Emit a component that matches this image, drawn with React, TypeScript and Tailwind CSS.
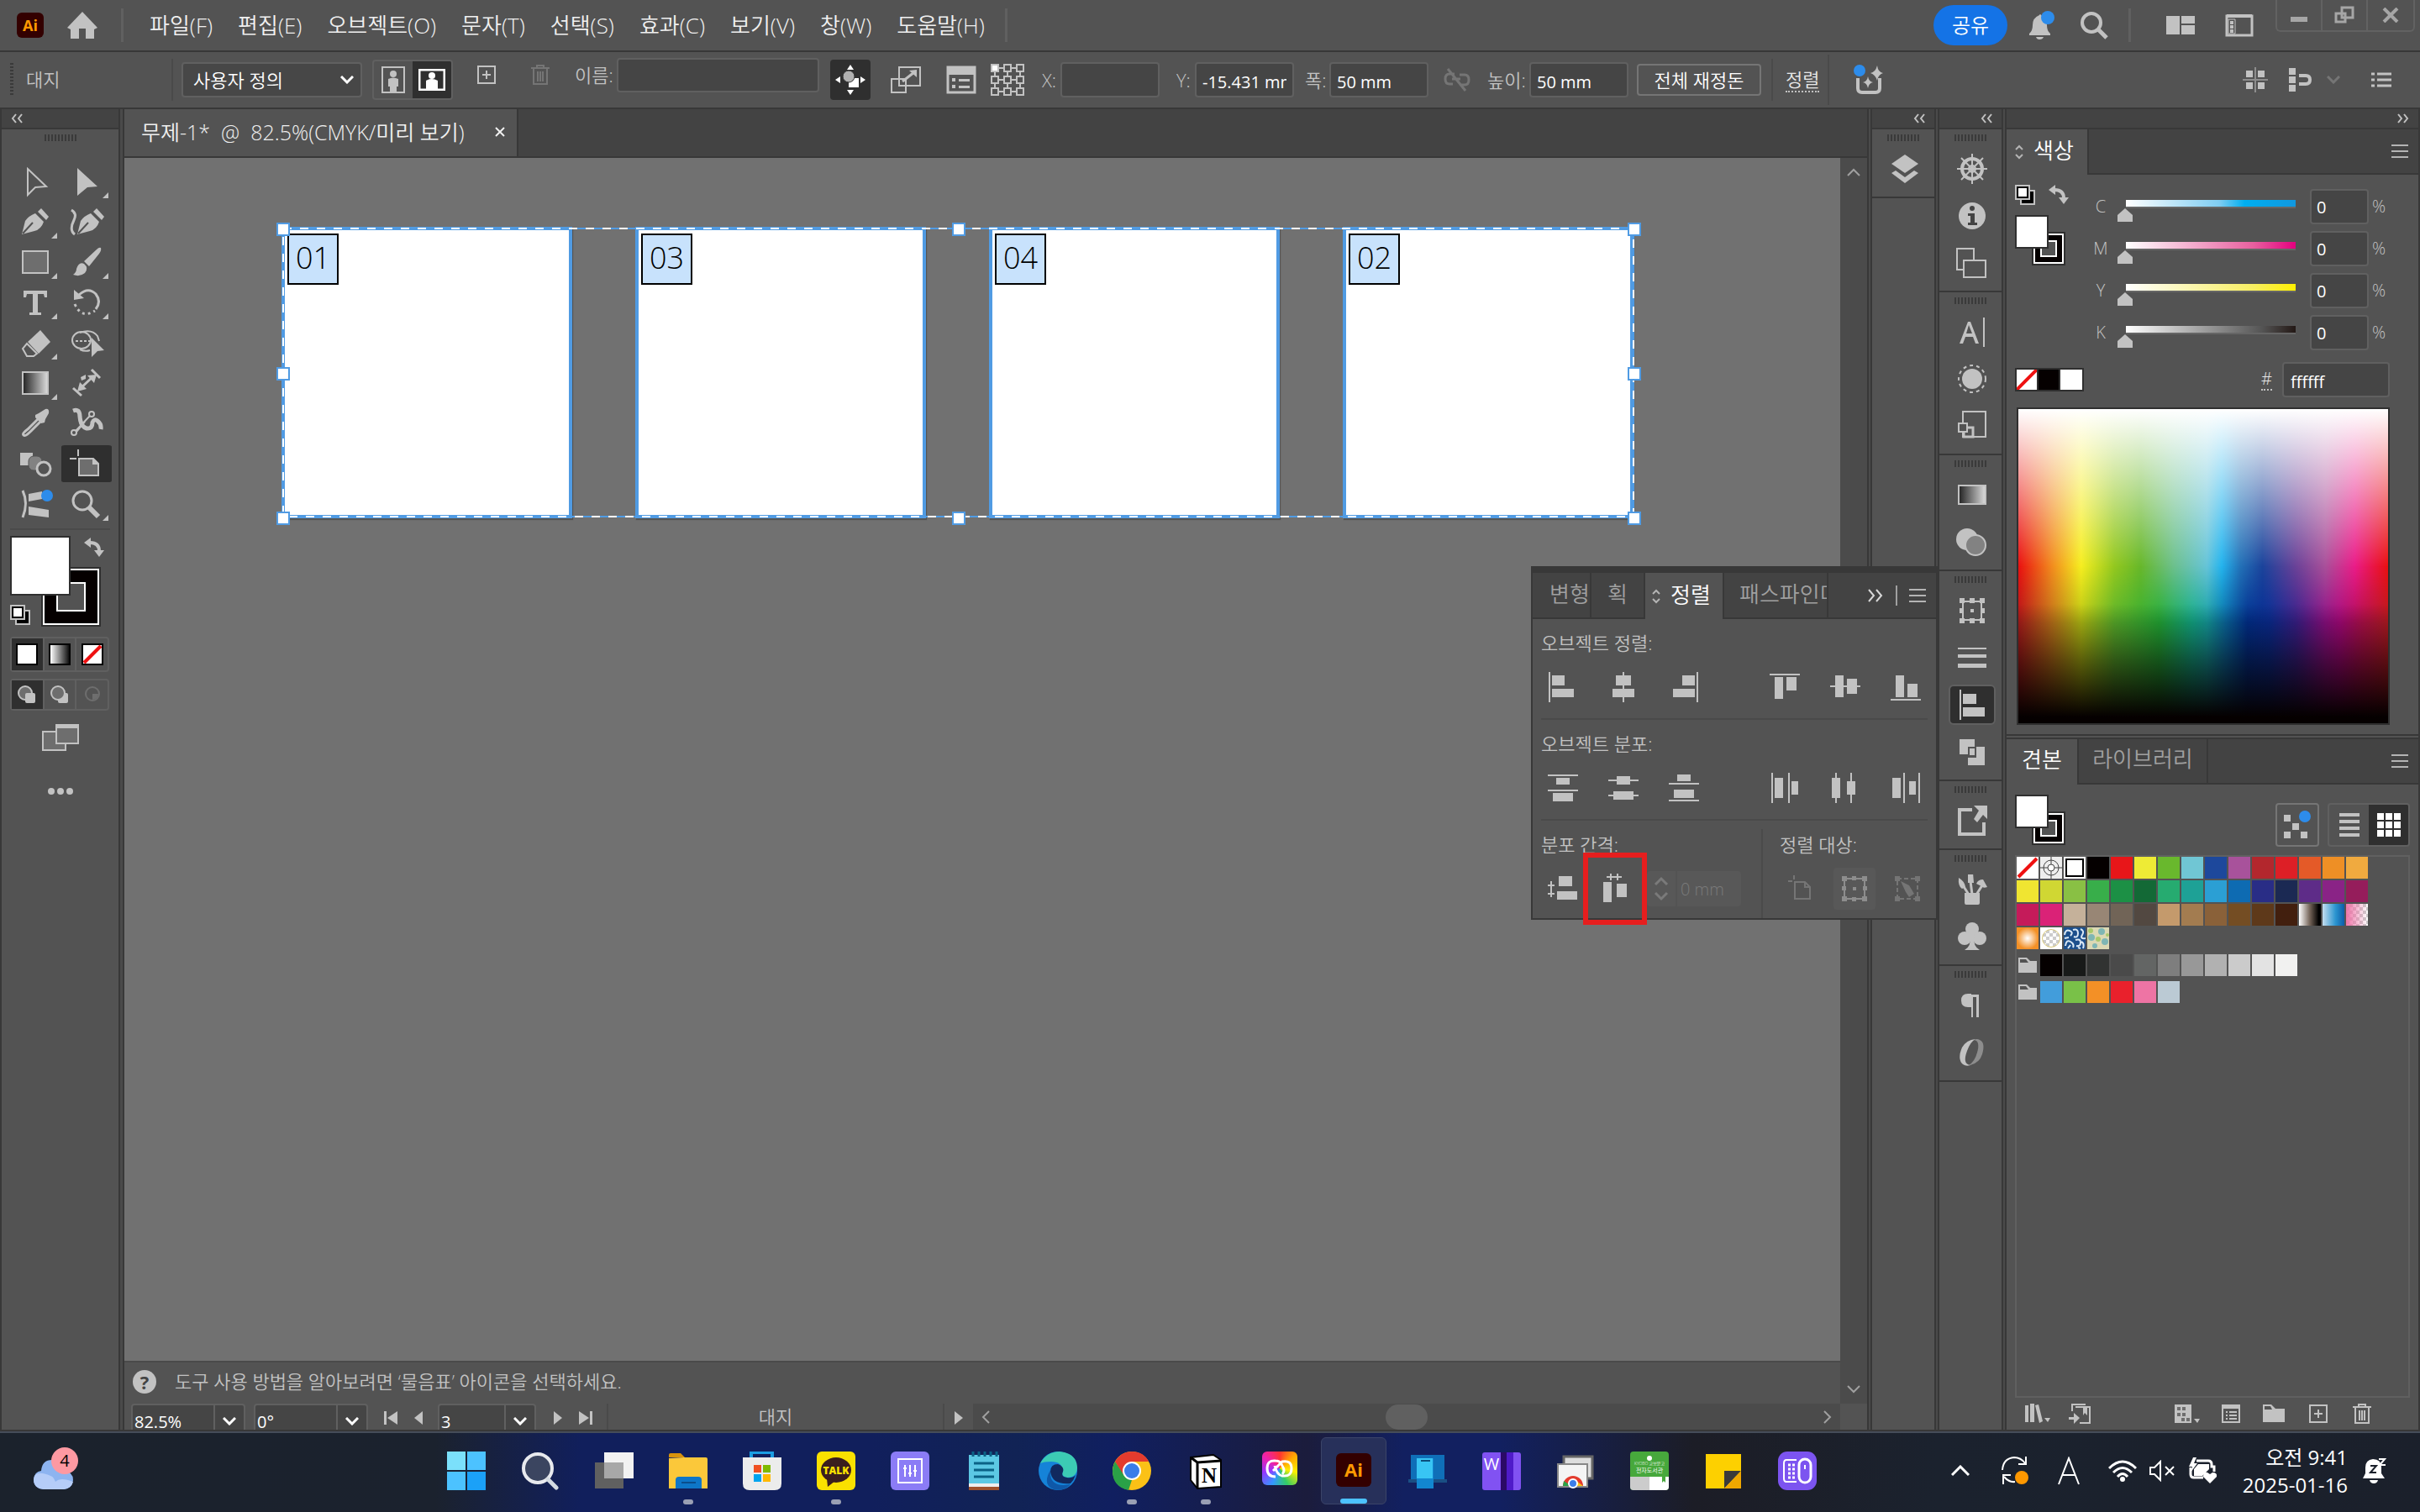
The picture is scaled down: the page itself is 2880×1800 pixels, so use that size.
import React from 'react';
import clsx from 'clsx';

const menus = ['파일(F)', '편집(E)', '오브젝트(O)', '문자(T)', '선택(S)', '효과(C)', '보기(V)', '창(W)', '도움말(H)'];

// 공통 svg 래퍼
function Svg({ w, h, box, cls, children }: any) {
  return (
    <svg width={w} height={h} viewBox={box || `0 0 ${w} ${h}`} fill="currentColor" className={clsx('block flex-none', cls)} aria-hidden="true">
      {children}
    </svg>
  );
}

function Grip() {
  return (
    <div className="h-5 flex items-center justify-center">
      <div className="w-[38px] h-2 bg-[repeating-linear-gradient(to_right,#3a3a3a_0_2px,#535353_2px_4px)]"></div>
    </div>
  );
}

function Arrows({ dir }: any) {
  return (
    <Svg w={16} h={12}>
      <path d={dir === 'r' ? 'M2 1 L6 6 L2 11 M9 1 L13 6 L9 11' : 'M7 1 L3 6 L7 11 M14 1 L10 6 L14 11'} fill="none" stroke="#c2c2c2" strokeWidth="2" />
    </Svg>
  );
}

function Chevron({ cls }: any) {
  return <Svg w={16} h={10} cls={cls}><path d="M1 1 L8 8 L15 1" fill="none" stroke="currentColor" strokeWidth="3" /></Svg>;
}

function MenuLines() {
  return <Svg w={20} h={16}><path d="M0 1H20M0 8H20M0 15H20" stroke="#b4b4b4" strokeWidth="2" /></Svg>;
}

// 상단 메뉴바
function TopBar() {
  return (
    <header className="h-[62px] flex-none flex items-center border-b-2 border-[#383838] pl-5 text-[#f0f0f0]">
      <div className="w-8 h-[30px] rounded-md bg-[#330000] text-[#ff9a00] text-lg font-bold leading-none flex items-center justify-center">Ai</div>
      <button className="ml-7" aria-label="홈">
        <Svg w={36} h={32} cls="text-[#c2c2c2]"><path d="M18 0 L36 19 L32 21 V32 H22 V20 H14 V32 H4 V21 L0 19Z" /></Svg>
      </button>
      <div className="ml-7 w-[3px] h-10 bg-[#606060]"></div>
      <nav className="ml-[31px] flex gap-[30px] text-[26px] whitespace-nowrap">
        {menus.map((m) => <button key={m}>{m}</button>)}
      </nav>
      <div className="ml-6 w-[3px] h-10 bg-[#606060]"></div>
      <div className="ml-auto flex items-center text-[#c2c2c2]">
        <button className="w-[88px] h-12 rounded-full bg-[#1473e6] text-white text-[24px]">공유</button>
        <button className="ml-6" aria-label="알림">
          <Svg w={34} h={34}>
            <path d="M14 5 Q15 3 16 5 Q23 8 23 17 Q23 24 27 27 V29 H2 V27 Q6 24 6 17 Q6 8 14 5Z" /><path d="M10 31 H19 Q18 34 14 34 Q11 34 10 31Z" />
            <circle cx="24" cy="8" r="8" fill="#2d8ceb" />
          </Svg>
        </button>
        <button className="ml-7" aria-label="검색">
          <Svg w={34} h={34}><circle cx="14" cy="14" r="11" fill="none" stroke="currentColor" strokeWidth="4" /><path d="M22 22 L32 32" stroke="currentColor" strokeWidth="5" /></Svg>
        </button>
        <div className="ml-6 w-[3px] h-10 bg-[#606060]"></div>
        <button className="ml-[42px]" aria-label="문서 정렬">
          <Svg w={34} h={24}><path d="M0 1H16V23H0ZM18 1H34V10H18ZM18 12H34V23H18Z" /></Svg>
        </button>
        <button className="ml-9" aria-label="작업 영역">
          <Svg w={34} h={28}><path d="M2 3H32V26H2Z" fill="none" stroke="currentColor" strokeWidth="3" /><path d="M2 1H32V5H2ZM6 9H10V13H6ZM6 14H10V18H6ZM6 19H10V23H6Z" /><path d="M4 7H12V24H4Z" fill="none" stroke="currentColor" /></Svg>
        </button>
        <div className="ml-[26px] mr-1.5 self-start h-[38px] mb-[22px] flex border-2 border-t-0 border-[#626262] rounded-b-md divide-x-2 divide-[#626262] text-[#a6a6a6]">
          <button className="w-[54px] flex justify-center items-center" aria-label="최소화"><Svg w={20} h={20}><path d="M0 12H20V18H0Z" /></Svg></button>
          <button className="w-[54px] flex justify-center items-center" aria-label="복원"><Svg w={24} h={22}><path d="M9 2H22V14H9ZM2 9H13V19H2Z" fill="#535353" stroke="currentColor" strokeWidth="3" /></Svg></button>
          <button className="w-[54px] flex justify-center items-center" aria-label="닫기"><Svg w={20} h={18}><path d="M2 1L18 17M18 1L2 17" stroke="currentColor" strokeWidth="4" /></Svg></button>
        </div>
      </div>
    </header>
  );
}

function Field({ id, label, value, cls }: any) {
  return (
    <>
      <label htmlFor={id} className={clsx('flex-none whitespace-nowrap', cls)}>{label}</label>
      <input id={id} defaultValue={value} className="flex-none w-[118px] h-[42px] rounded border-2 border-[#606060] bg-[#454545] px-[7px] pt-1 text-[20px] font-normal text-white" />
    </>
  );
}

// 대지 옵션 바
function OptionBar() {
  return (
    <div className="h-[68px] flex-none flex items-center border-b-2 border-[#383838] pl-3 text-[22px] text-[#c2c2c2] whitespace-nowrap">
      <div className="w-1 h-10 bg-[repeating-linear-gradient(#3a3a3a_0_2px,#535353_2px_4px)]"></div>
      <div className="ml-[15px] w-[173px] pb-0.5">대지</div>
      <div className="w-0.5 h-[50px] bg-[#4a4a4a]"></div>
      <div className="relative ml-2.5 text-white">
        <select aria-label="대지 사전 설정" className="appearance-none w-[215px] h-[42px] rounded border-2 border-[#606060] bg-[#474747] pl-3 text-white">
          <option>사용자 정의</option>
        </select>
        <Chevron cls="absolute right-[10px] top-4" />
      </div>
      <div className="ml-3 flex w-24 h-[48px] rounded border-2 border-[#606060] overflow-hidden">
        <button className="flex-1 flex items-center justify-center" aria-label="세로">
          <Svg w={28} h={32}><path d="M1 1H27V31H1Z" fill="none" stroke="currentColor" strokeWidth="2" /><circle cx="14" cy="9" r="4" /><path d="M8 15Q14 12 20 15V24H18V31H10V24H8Z" /></Svg>
        </button>
        <button className="flex-1 flex items-center justify-center bg-[#2f2f2f] text-white" aria-label="가로">
          <Svg w={32} h={26}><path d="M1 1H31V25H1Z" fill="none" stroke="currentColor" strokeWidth="3" /><circle cx="16" cy="8" r="4" /><path d="M9 14Q16 10 23 14V25H9Z" /></Svg>
        </button>
      </div>
      <div className="self-start h-[54px] flex items-center">
        <button className="ml-[27px]" aria-label="새 대지"><Svg w={26} h={24}><path d="M3 2H23V22H3Z" fill="none" stroke="currentColor" strokeWidth="2" /><path d="M8 12H18M13 7V17" stroke="currentColor" strokeWidth="2" /></Svg></button>
        <button className="ml-[38px] text-[#757575]" aria-label="대지 삭제"><Svg w={26} h={26}><path d="M2 5H24M9 5V2H17V5M5 6V24H21V6M10 9V21M13 9V21M16 9V21" fill="none" stroke="currentColor" strokeWidth="2" /></Svg></button>
        <label htmlFor="nm" className="ml-7 w-[50px]">이름:</label>
        <input id="nm" className="w-[241px] h-[41px] rounded border-2 border-[#606060] bg-[#454545]" />
      </div>
      <button className="ml-[13px] w-12 h-12 rounded bg-[#2f2f2f] text-white flex items-center justify-center" aria-label="대지와 함께 이동">
        <Svg w={36} h={36}>
          <path d="M18 0L22 6H14ZM18 36L14 30H22ZM0 18L6 14V22ZM36 18L30 14V22Z" />
          <path d="M16 16H28V27H16Z" /><circle cx="16" cy="14" r="7" fill="#b0b0b0" stroke="#2f2f2f" />
        </Svg>
      </button>
      <Svg w={40} h={36} cls="ml-[22px]"><path d="M12 3H37V25H12ZM3 17H20V33H3Z" fill="none" stroke="currentColor" strokeWidth="2" /><path d="M16 20L30 9" stroke="currentColor" strokeWidth="3" /><path d="M33 6V15L24 7Z" /></Svg>
      <Svg w={40} h={36} cls="ml-[26px]"><path d="M4 3H36V33H4Z" fill="none" stroke="currentColor" strokeWidth="3" /><path d="M4 3H36V12H4ZM9 16H13V20H9ZM17 17H30V20H17ZM9 24H13V28H9ZM17 25H30V28H17Z" /></Svg>
      <Svg w={42} h={40} cls="ml-3.5"><path d="M6 6H36V34H6ZM6 20H36M21 6V34" fill="none" stroke="currentColor" strokeWidth="2" />
        {[6, 20, 34].map((y) => [6, 21, 36].map((x) => <rect key={x + '-' + y} x={x - 4} y={y - 4} width="8" height="8" fill={x + y === 12 ? '#fff' : '#535353'} stroke="currentColor" strokeWidth="2" />))}
      </Svg>
      <Field id="px" label="X:" value="" cls="ml-5 w-[22px]" />
      <Field id="py" label="Y:" value="-15.431 mm" cls="ml-5 w-[22px]" />
      <Field id="pw" label="폭:" value="50 mm" cls="ml-[13px] w-[29px]" />
      <Svg w={32} h={28} cls="ml-[18px] text-[#757575]"><path d="M13 7H7Q2 7 2 13T7 19H11M19 8H25Q30 8 30 14T25 20H21M5 1L26 27M10 13H20" fill="none" stroke="currentColor" strokeWidth="3" /></Svg>
      <Field id="ph" label="높이:" value="50 mm" cls="ml-5 w-[50px]" />
      <button className="ml-2.5 w-[148px] h-[38px] flex-none rounded border-2 border-[#757575] text-white leading-none">전체 재정돈</button>
      <div className="ml-3 w-0.5 h-[50px] bg-[#4a4a4a]"></div>
      <button className="ml-[15px] text-[#e8e8e8] leading-7 border-b-2 border-dotted border-[#c2c2c2]">정렬</button>
      <div className="ml-2.5 w-0.5 h-[60px] bg-[#4a4a4a]"></div>
      <button className="ml-7" aria-label="생성형 도구">
        <Svg w={38} h={36}><path d="M6 16V28Q6 33 11 33H27Q32 33 32 28V16" fill="none" stroke="currentColor" strokeWidth="4" />
          <path d="M29 1Q30 9 36 10Q30 12 29 19Q27 12 21 10Q27 9 29 1ZM18 14Q19 20 24 21Q19 22 18 28Q17 22 12 21Q17 20 18 14Z" /><circle cx="8" cy="7" r="7" fill="#2d8ceb" /></Svg>
      </button>
      <div className="ml-auto mr-[34px] flex items-center">
        <Svg w={30} h={30}><path d="M4 4H12V12H4ZM18 4H26V12H18ZM4 18H12V26H4ZM18 18H26V26H18Z" /><path d="M0 15H30M15 0V30" stroke="#8d8d8d" strokeWidth="2" /></Svg>
        <Svg w={30} h={30} cls="ml-6"><path d="M1 1H9V9H1ZM1 11H9V19H1ZM1 21H9V29H1Z" /><path d="M13 10H21Q26 10 26 15T21 20H13" fill="none" stroke="currentColor" strokeWidth="4" /></Svg>
        <Chevron cls="ml-4 text-[#757575]" />
        <Svg w={24} h={18} cls="ml-[37px]"><path d="M7 2H24M7 9H24M7 16H24M0 2H4M0 9H4M0 16H4" stroke="currentColor" strokeWidth="3" /></Svg>
      </div>
    </div>
  );
}

const line = { fill: 'none', stroke: 'currentColor', strokeWidth: 2 };

// 도구 패널 아이콘 (40x36)
const tools: any[] = [
  { n: '선택', d: <path d="M11 3L33 24L20 25L11 34Z" {...line} /> },
  { n: '직접 선택', sub: true, d: <path d="M9 2L33 24L21 25L9 35Z" /> },
  { n: '펜', sub: true, d: <><path d="M4 33L8 17Q12 11 20 8L30 18Q27 27 19 29Z" /><path d="M23 6L27 2L36 12L33 16Z" /><path d="M5 32L17 19" stroke="#535353" strokeWidth="2" /></> },
  { n: '곡률', d: <><g transform="translate(5 0)"><path d="M4 33L8 17Q12 11 20 8L30 18Q27 27 19 29Z" /><path d="M23 6L27 2L36 12L33 16Z" /><path d="M5 32L17 19" stroke="#535353" strokeWidth="2" /></g><path d="M2 4Q9 8 5 16Q-1 28 6 33" {...line} strokeWidth="3" /></> },
  { n: '사각형', sub: true, d: <path d="M5 5H35V31H5Z" {...line} fill="#6e6e6e" /> },
  { n: '브러시', sub: true, d: <><path d="M37 1Q38 4 35 8L23 23L17 17L32 3Q35 0 37 1Z" /><path d="M4 33Q8 30 8 26Q11 17 17 20Q23 25 18 31Q12 36 4 33Z" /></> },
  { n: '문자', sub: true, d: <path d="M6 4H34V12H31L30 8H23V30H27V33H13V30H17V8H10L9 12H6Z" /> },
  { n: '회전', sub: true, d: <><path d="M11 9Q22 -1 31 8Q38 17 31 26" {...line} strokeWidth="3" /><path d="M5 3V15L17 13Z" /><path d="M6 20Q14 38 30 28" {...line} strokeWidth="3" strokeDasharray="3 4" /></> },
  { n: '지우개', sub: true, d: <><path d="M11 17L26 3L38 17L24 31Z" /><path d="M10 19L22 31L18 34H10L5 25Z" {...line} /></> },
  { n: '도형 구성', d: <><ellipse cx="14" cy="15" rx="11" ry="10" {...line} /><path d="M12 6Q26 1 33 10L35 16" {...line} /><path d="M7 16H25" {...line} strokeDasharray="3 2" /><path d="M12 26Q18 29 24 27" {...line} /><path d="M26 12L41 27L33 28L26 35Z" /></> },
  { n: '그라디언트', sub: true, d: <path d="M5 5H35V31H5Z" {...line} fill="url(#gr)" /> },
  { n: '치수', d: <><path d="M11 26L28 10M4 24L14 33M26 2L36 12" {...line} strokeWidth="3" /><path d="M9 28L12 17L20 25ZM32 8L21 9L29 18ZM13 11L19 8V13L14 15Z" /></> },
  { n: '스포이드', d: <><path d="M25 11L11 25Q4 30 6 32T14 28L28 14" {...line} strokeWidth="3" /><path d="M20 8L24 6L32 1Q37 0 36 6L32 13L31 17L27 18L20 11Z" /></> },
  { n: '퍼펫 뒤틀기', d: <><path d="M4 3Q12 0 12 10Q13 22 20 24Q27 25 27 17Q29 12 33 15Q38 19 37 25" {...line} strokeWidth="5" /><circle cx="5" cy="29" r="3" {...line} /><circle cx="26" cy="7" r="3" {...line} /><path d="M7 27L24 9M8 28L18 16" {...line} /></> },
  { n: '블렌드', d: <><path d="M2 5H17V20H2Z" /><rect x="12" y="9" width="16" height="17" rx="6" fill="#828282" stroke="#535353" /><circle cx="30" cy="24" r="8" {...line} strokeWidth="3" fill="#535353" /></> },
  { n: '대지', on: true, d: <><path d="M0 12H8M10 1V9" {...line} /><path d="M11 12H28L34 18V32H11Z" {...line} fill="#6e6e6e" /><path d="M27 11V19H35Z" /></> },
  { n: '교차', d: <><path d="M5 2Q12 17 5 34" {...line} strokeWidth="3" /><path d="M12 6L28 3V12L12 15ZM12 21L36 25V34L12 31Z" /><circle cx="34" cy="8" r="7" fill="#2d8ceb" /></> },
  { n: '돋보기', sub: true, d: <><circle cx="15" cy="14" r="11" {...line} strokeWidth="3" /><path d="M23 22L34 33" {...line} strokeWidth="6" /></> },
];

function FillStroke() {
  return (
    <Svg w={60} h={60}>
      <path d="M21 21H59V59H21Z" fill="#050000" stroke="#2f2f2f" strokeWidth="2" /><path d="M23 23H57V57H23Z" fill="none" stroke="#fff" strokeWidth="2" /><path d="M31 31H49V49H31Z" fill="#535353" stroke="#fff" strokeWidth="2" />
      <path d="M1 1H39V39H1Z" fill="#fff" stroke="#2f2f2f" strokeWidth="2" />
    </Svg>
  );
}

function DefaultIcon() {
  return (
    <Svg w={24} h={24}>
      <path d="M7 7H23V23H7Z" fill="#000" stroke="#c2c2c2" strokeWidth="2" /><path d="M13 13H17V17H13Z" fill="#535353" stroke="#c2c2c2" /><path d="M1 1H17V17H1Z" fill="#000" stroke="#c2c2c2" strokeWidth="2" /><path d="M4 4H14V14H4Z" fill="#fff" />
    </Svg>
  );
}

function SwapIcon() {
  return <Svg w={24} h={24} cls="text-[#c2c2c2]"><path d="M7 6Q18 6 18 16" fill="none" stroke="currentColor" strokeWidth="4" /><path d="M8 0V12L0 6ZM12 15H24L18 23Z" /></Svg>;
}

function ToolPanel() {
  return (
    <aside className="w-[143px] flex-none border-x-2 border-[#383838] text-[#c2c2c2]">
      <svg width="0" height="0" className="absolute"><defs><linearGradient id="gr"><stop offset="0" stopColor="#222" /><stop offset="1" stopColor="#ddd" /></linearGradient></defs></svg>
      <div className="h-6 bg-[#434343] border-b-2 border-[#383838] flex items-center pl-2.5"><Arrows dir="l" /></div>
      <Grip />
      <div className="mt-[18px] pl-2.5 grid grid-cols-[61px_61px]">
        {tools.map((t) => (
          <button key={t.n} aria-label={t.n} className={clsx('h-12 w-[60px] flex items-center', t.on && 'bg-[#2f2f2f] rounded bg-clip-content py-0.5')}>
            <Svg w={60} h={44} box="0 2 60 44">
              <g transform="translate(10 6)">{t.d}</g>
              {t.sub && <path d="M56 37V44H49Z" />}
            </Svg>
          </button>
        ))}
      </div>
      <div className="mx-2.5 mt-[5px] h-0.5 bg-[#4a4a4a]"></div>
      <div className="mx-2.5 mt-[7px] h-[110px] w-[120px] relative">
        <Svg w={108} h={108}>
          <path d="M38 38H107V107H38Z" fill="#050000" stroke="#2f2f2f" strokeWidth="2" /><path d="M40 40H105V105H40Z" fill="none" stroke="#fff" strokeWidth="2" /><path d="M56 56H89V89H56Z" fill="#535353" stroke="#fff" strokeWidth="2" />
          <path d="M1 1H71V70H1Z" fill="#fff" stroke="#2f2f2f" strokeWidth="2" />
        </Svg>
        <button className="absolute left-[88px] top-0.5" aria-label="칠과 선 교체"><SwapIcon /></button>
        <button className="absolute left-0 top-[82px]" aria-label="초기값"><DefaultIcon /></button>
      </div>
      <div className="mx-2.5 mt-2.5 w-[118px] h-[42px] flex rounded border-2 border-[#606060] divide-x-2 divide-[#606060]">
        <button className="flex-1 bg-[#2f2f2f] flex items-center justify-center" aria-label="색상"><span className="w-[26px] h-[26px] bg-white border-2 border-black"></span></button>
        <button className="flex-1 flex items-center justify-center" aria-label="그라디언트 칠"><span className="w-[26px] h-[26px] border-2 border-black bg-[linear-gradient(to_right,#fff,#111)]"></span></button>
        <button className="flex-1 flex items-center justify-center" aria-label="없음"><Svg w={26} h={26}><path d="M1 1H25V25H1Z" fill="#fff" stroke="#000" strokeWidth="2" /><path d="M3 23L23 3" stroke="#e11" strokeWidth="4" /></Svg></button>
      </div>
      <div className="mx-2.5 mt-2 w-[118px] h-[38px] flex rounded border-2 border-[#606060] divide-x-2 divide-[#606060]">
        <button className="flex-1 bg-[#2f2f2f] flex items-center justify-center" aria-label="표준 그리기"><Svg w={22} h={22}><circle cx="9" cy="9" r="8" {...line} fill="#6e6e6e" /><rect x="9" y="9" width="12" height="12" rx="2" /></Svg></button>
        <button className="flex-1 flex items-center justify-center" aria-label="배경 그리기"><Svg w={22} h={22}><rect x="9" y="9" width="12" height="12" rx="2" /><circle cx="9" cy="9" r="8" {...line} fill="#6e6e6e" /></Svg></button>
        <button className="flex-1 flex items-center justify-center text-[#6e6e6e]" aria-label="내부 그리기"><Svg w={22} h={22}><circle cx="11" cy="10" r="8" {...line} /><path d="M11 10H18Q18 17 11 17Z" /></Svg></button>
      </div>
      <button className="block mt-4 ml-12" aria-label="화면 모드"><Svg w={44} h={32}><path d="M1 9H28V31H1Z" {...line} fill="#6e6e6e" /><path d="M17 1H43V23H17Z" {...line} fill="#6e6e6e" /><path d="M17 1H43V5H17Z" /></Svg></button>
      <button className="block mt-11 ml-[54px]" aria-label="도구 모음 편집"><Svg w={32} h={8}><circle cx="5" cy="4" r="4" /><circle cx="16" cy="4" r="4" /><circle cx="27" cy="4" r="4" /></Svg></button>
    </aside>
  );
}

// 캔버스 위 대지들
const boards = [
  { no: '01', pos: 'left-[187px]' },
  { no: '03', pos: 'left-[608px]' },
  { no: '04', pos: 'left-[1029px]' },
  { no: '02', pos: 'left-[1450px]' },
];

function Canvas() {
  return (
    <div className="relative flex-1 min-h-0 overflow-hidden bg-[#717171]">
      {boards.map((b) => (
        <div key={b.no} className={clsx('absolute top-[82px] w-[346px] h-[347px] bg-white border-4 border-[#509be3] shadow-[1px_2px_1px_#555]', b.pos)}>
          <div className="ml-[3px] mt-1 w-[61px] h-[61px] border-2 border-black bg-[#c8e2fc] text-black text-[36px] leading-[54px] text-center">{b.no}</div>
        </div>
      ))}
      <svg width="1630" height="366" viewBox="0 0 1630 366" className="absolute left-[178px] top-[74px]" aria-hidden="true">
        <path d="M11 10H1618V353H11Z" fill="none" stroke="#509be3" strokeWidth="2" />
        <path d="M11 10H1618V353H11Z" fill="none" stroke="#fff" strokeWidth="2" strokeDasharray="10 10" />
        {[11, 815, 1619].map((x) => [11, 183, 355].map((y) => (x === 815 && y === 183) ? null :
          <rect key={x + '-' + y} x={x - 7} y={y - 7} width="14" height="14" fill="#fff" stroke="#509be3" strokeWidth="2" />))}
      </svg>
    </div>
  );
}

function StatusField({ id, label, value, cls }: any) {
  return (
    <div className={clsx('flex-none h-11 flex rounded border-2 border-[#606060] bg-[#454545] text-white', cls)}>
      <input id={id} aria-label={label} defaultValue={value} className="min-w-0 flex-1 pl-0.5 text-[20px] font-normal" />
      <button className="w-[36px] border-l-2 border-[#606060] flex justify-center pt-3.5" aria-label={label + ' 목록'}><Chevron /></button>
    </div>
  );
}

function DocArea() {
  return (
    <section className="flex-1 min-w-0 flex flex-col border-x-2 border-[#383838] bg-[#535353]">
      <div className="h-[58px] flex-none flex bg-[#434343] border-b-2 border-[#383838]">
        <div className="w-[469px] border-r-2 border-[#383838] bg-[#535353] flex items-center pl-5 pb-0.5 text-[25px] leading-[54px] text-[#f0f0f0] whitespace-nowrap">
          무제-1*{'\u00a0\u00a0'}@{'\u00a0\u00a0'}82.5%(CMYK/미리 보기)
          <button className="ml-auto mr-3.5" aria-label="탭 닫기"><Svg w={12} h={14}><path d="M1 2L11 12M11 2L1 12" stroke="currentColor" strokeWidth="2" /></Svg></button>
        </div>
      </div>
      <div className="flex-1 min-h-0 flex">
        <div className="flex-1 min-w-0 flex flex-col">
          <Canvas />
          <div className="h-[51px] flex-none border-t-2 border-[#4a4a4a] flex items-center pl-2.5 pb-1 gap-[22px] text-[22px] text-[#c2c2c2] whitespace-nowrap">
            <button className="w-7 h-7 rounded-full bg-[#c2c2c2] text-[#434343] font-bold leading-7" aria-label="도움말">?</button>
            도구 사용 방법을 알아보려면 ‘물음표’ 아이콘을 선택하세요.
          </div>
        </div>
        <div className="w-8 flex-none bg-[#4b4b4b] flex flex-col items-center justify-between py-3 text-[#a0a0a0]">
          <Svg w={16} h={10}><path d="M1 9L8 2L15 9" {...line} /></Svg>
          <Svg w={16} h={10}><path d="M1 1L8 8L15 1" {...line} /></Svg>
        </div>
      </div>
      <div className="h-[31px] flex-none overflow-hidden flex items-start pl-2 text-[#c2c2c2]">
        <StatusField id="zm" label="확대" value="82.5%" cls="w-[136px]" />
        <StatusField id="rt" label="회전" value="0°" cls="ml-2.5 w-[136px]" />
        <div className="flex-none h-[34px] ml-[18px] flex items-center gap-4">
          <Svg w={18} h={16}><path d="M1 0H4V16H1ZM17 0V16L5 8Z" /></Svg>
          <Svg w={16} h={16}><path d="M13 0V16L3 8Z" /></Svg>
        </div>
        <StatusField id="ab" label="대지 탐색" value="3" cls="ml-[15px] w-[117px]" />
        <div className="flex-none h-[34px] ml-[18px] flex items-center gap-4">
          <Svg w={16} h={16}><path d="M3 0V16L13 8Z" /></Svg>
          <Svg w={18} h={16}><path d="M14 0H17V16H14ZM1 0V16L13 8Z" /></Svg>
        </div>
        <div className="flex-none h-[31px] ml-4 w-[402px] border-x-2 border-[#4a4a4a] text-center text-[22px] leading-[31px]">대지</div>
        <div className="flex-none h-[34px] ml-2.5 flex items-center"><Svg w={16} h={16}><path d="M2 0V16L12 8Z" /></Svg></div>
        <div className="ml-2 mr-8 flex-1 h-full bg-[#4b4b4b] flex items-center justify-between px-2.5 text-[#a0a0a0]">
          <Svg w={10} h={16}><path d="M9 1L2 8L9 15" {...line} /></Svg>
          <div className="w-[50px] h-[30px] rounded-full bg-[#606060]"></div>
          <Svg w={10} h={16}><path d="M1 1L8 8L1 15" {...line} /></Svg>
        </div>
      </div>
    </section>
  );
}

// 아이콘 도크
const dock: any[][] = [
  [
    ['색상 안내', <><circle cx="20" cy="18" r="12" {...line} strokeWidth="4" /><circle cx="20" cy="18" r="4" {...line} /><path d="M20 0V36M2 18H38M7 5L33 31M33 5L7 31" {...line} /></>],
    ['정보', <><circle cx="20" cy="18" r="16" /><path d="M15 15H23V26H26V29H15V26H18V18H15Z" fill="#434343" /><circle cx="20" cy="9" r="3" fill="#434343" /></>],
    ['변형 효과', <><path d="M2 1H22V26H2Z" {...line} /><path d="M10 15H36V35H10Z" {...line} fill="#535353" /></>],
  ],
  [
    ['문자', <path d="M5 32L15 6H18L28 32H24L21 24H12L9 32ZM13 20H20L16 10ZM33 1H35V36H33Z" fillRule="evenodd" />],
    ['모양', <><circle cx="20" cy="18" r="12" /><circle cx="20" cy="18" r="16" {...line} strokeDasharray="4 4" /></>],
    ['그래픽 스타일', <><path d="M9 1H36V31H9Z" {...line} /><path d="M10 20H21V31H10Z" {...line} strokeWidth="3" fill="#535353" /><path d="M4 15H14V25H4Z" {...line} fill="#535353" /></>],
  ],
  [
    ['그라디언트', <path d="M4 7H36V29H4Z" {...line} fill="url(#gr)" />],
    ['투명도', <><circle cx="14" cy="15" r="13" /><circle cx="24" cy="22" r="12" {...line} fill="#828282" /></>],
  ],
  [
    ['변형', <><path d="M9 7H31V29H9Z" {...line} /><path d="M5 3H11V9H5ZM17 3H23V9H17ZM29 3H35V9H29ZM5 15H10V21H5ZM30 15H35V21H30ZM5 27H11V33H5ZM17 27H23V33H17ZM29 27H35V33H29ZM18 16H22V20H18Z" /></>],
    ['획', <path d="M3 6H37V8H3ZM3 14H37V18H3ZM3 25H37V30H3Z" />],
    ['정렬', <path d="M5 0H7V36H5ZM9 5H25V17H9ZM9 21H35V32H9Z" />],
    ['패스파인더', <><path d="M5 3H23V12H15V21H5ZM25 12H35V34H15V25H25Z" /><path d="M17 14H23V22H17Z" /></>],
  ],
  [['자산 내보내기', <><path d="M20 5H5V34H34V20" {...line} strokeWidth="4" /><path d="M22 0H38V16L33 11L26 20L22 16L28 6Z" /></>]],
  [
    ['브러시', <><path d="M11 22H29V34Q29 36 27 36H13Q11 36 11 34ZM15 0L21 -2L22 10H15Z" /><path d="M18 8L20 24M9 13L16 24M32 13L25 24" {...line} strokeWidth="3" /><path d="M4 4Q11 8 12 15L8 17Q3 14 4 4ZM25 11Q27 6 33 6L38 15Q33 17 31 14Z" /></>],
    ['심볼', <><circle cx="20" cy="9" r="8" /><circle cx="11" cy="20" r="8" /><circle cx="29" cy="20" r="8" /><path d="M18 16H22Q21 30 29 34H11Q19 30 18 16Z" /></>],
  ],
  [
    ['단락', <><path d="M19 4V20H15Q7 20 7 12T15 4Z" /><path d="M21 5H28V32H25V8H21V32H19V5Z" /></>],
    ['OpenType', <><path d="M24 2Q13 3 8 12Q2 26 9 32Q13 35 18 33Q8 32 14 16Q18 5 24 2Z" /><path d="M18 33Q29 30 32 20Q36 6 29 3Q26 1 22 3Q30 4 26 18Q23 29 16 33Z" fill="#8d8d8d" /></>],
  ],
];

function DockColumn({ groups, active }: any) {
  return (
    <div className="w-[78px] flex-none border-x-2 border-[#383838] text-[#c2c2c2]">
      <div className="h-6 bg-[#434343] border-b-2 border-[#383838] flex items-center justify-end pr-2.5"><Arrows dir="l" /></div>
      {groups.map((g: any[], i: number) => (
        <div key={i} className="border-b-2 border-[#383838] pb-1">
          <Grip />
          {g.map(([name, d]: any) => (
            <button key={name} aria-label={name} className="h-14 w-full pl-1 pb-0.5 flex items-center justify-center">
              <span className={clsx('w-14 h-12 rounded-md flex items-center justify-center', name === active && 'bg-[#2f2f2f] border-2 border-[#606060]')}>
                <Svg w={40} h={36}>{d}</Svg>
              </span>
            </button>
          ))}
        </div>
      ))}
    </div>
  );
}

const layers = [[['레이어', <><path d="M20 1L36 12L20 23L4 12Z" /><path d="M4 23L9 20L20 28L31 20L36 23L20 35Z" /></>]]];

const inks = [
  { n: 'C', bar: 'bg-[linear-gradient(to_right,#fff,#7fcdf2_55%,#00aeef_70%,#1198e0)]' },
  { n: 'M', bar: 'bg-[linear-gradient(to_right,#fff,#e8609f_75%,#e4007f)]' },
  { n: 'Y', bar: 'bg-[linear-gradient(to_right,#fff,#f7ee62_75%,#fff100)]' },
  { n: 'K', bar: 'bg-[linear-gradient(to_right,#fff,#555_80%,#231815)]' },
];

const spectrumTop = [[0, '#ea1010'], [9, '#f28a1e'], [17, '#f6ee20'], [26, '#93c81f'], [33, '#68b82a'], [42, '#6cc08c'], [51, '#66c4d8'], [55, '#24b4ee'], [60, '#2372b8'], [66, '#1b449c'], [75, '#6a4298'], [83, '#a9509a'], [91, '#ea1c88'], [100, '#ea1010']];
const spectrumLow = [[0, '#b01c1c'], [9, '#c0741a'], [17, '#b8c414'], [26, '#5cb42c'], [38, '#24ad36'], [47, '#12ac88'], [51, '#14a0a0'], [56, '#0a6ca4'], [62, '#003090'], [68, '#0a2c94'], [75, '#38208c'], [83, '#8e0f85'], [87, '#a8087c'], [93, '#b4104c'], [100, '#b81c22']];

function Spectrum() {
  return (
    <svg viewBox="0 0 440 374" preserveAspectRatio="none" className="block w-[444px] h-[378px] border-2 border-[#2f2f2f]" role="img" aria-label="색상 스펙트럼">
      <defs>
        <linearGradient id="sa">{spectrumTop.map(([o, c]) => <stop key={o} offset={o + '%'} stopColor={c as string} />)}</linearGradient>
        <linearGradient id="sb">{spectrumLow.map(([o, c]) => <stop key={o} offset={o + '%'} stopColor={c as string} />)}</linearGradient>
        <linearGradient id="sm" x2="0" y2="1"><stop offset=".5" stopColor="#000" /><stop offset=".68" stopColor="#fff" /></linearGradient>
        <linearGradient id="sw" x2="0" y2="1"><stop offset="0" stopColor="#fff" /><stop offset=".25" stopColor="#fff" stopOpacity=".5" /><stop offset=".5" stopColor="#fff" stopOpacity="0" /></linearGradient>
        <linearGradient id="sk" x2="0" y2="1"><stop offset=".62" stopColor="#050000" stopOpacity="0" /><stop offset=".8" stopColor="#050000" stopOpacity=".52" /><stop offset=".98" stopColor="#050000" /></linearGradient>
        <mask id="mk"><rect width="440" height="374" fill="url(#sm)" /></mask>
      </defs>
      <rect width="440" height="374" fill="url(#sa)" />
      <rect width="440" height="374" fill="url(#sb)" mask="url(#mk)" />
      <rect width="440" height="374" fill="url(#sw)" />
      <rect width="440" height="374" fill="url(#sk)" />
    </svg>
  );
}

function UpDown() {
  return <Svg w={10} h={18} cls="mt-1 text-[#b4b4b4]"><path d="M1 6L5 2L9 6M1 12L5 16L9 12" {...line} /></Svg>;
}

function ColorPanel() {
  return (
    <div className="flex-none h-[722px] border-b-2 border-[#383838]">
      <div className="h-[54px] flex bg-[#434343]">
        <h2 className="w-24 bg-[#535353] flex items-center gap-3 pl-2.5 pb-1 text-[26px] text-white"><UpDown />색상</h2>
        <div className="flex-1 border-l-2 border-b-2 border-[#383838] flex items-center justify-end pr-3"><MenuLines /></div>
      </div>
      <div className="pl-2.5 pt-3 flex">
        <div className="w-[64px] flex-none">
          <div className="flex justify-between"><DefaultIcon /><SwapIcon /></div>
          <div className="mt-3"><FillStroke /></div>
        </div>
        <div className="ml-6 mt-[5px] flex flex-col gap-2 text-[22px] text-[#c2c2c2]">
          {inks.map((k) => (
            <div key={k.n} className="flex items-center h-[42px]">
              <label htmlFor={'ink' + k.n} className="w-8 pr-1 text-center text-[20px]">{k.n}</label>
              <div className="w-[226px] pt-2.5">
                <div className={clsx('mx-3 h-2.5 border-b-2 border-[#666]', k.bar)}></div>
                <input id={'ink' + k.n} type="range" defaultValue="0" className="block w-full h-4 px-0.5 appearance-none bg-transparent [&::-webkit-slider-thumb]:appearance-none [&::-webkit-slider-thumb]:w-[18px] [&::-webkit-slider-thumb]:h-4 [&::-webkit-slider-thumb]:bg-[#c2c2c2] [&::-webkit-slider-thumb]:[clip-path:polygon(50%_0,100%_50%,100%_100%,0_100%,0_50%)]" />
              </div>
              <input aria-label={k.n + ' 값'} defaultValue="0" className="ml-[5px] w-[70px] h-[42px] rounded border-2 border-[#606060] bg-[#454545] pl-1.5 text-[20px] font-normal text-white" />
              <span className="ml-1 text-[20px]">%</span>
            </div>
          ))}
        </div>
      </div>
      <div className="mt-3.5 pl-2.5 flex items-center h-[42px]">
        <div className="flex border-2 border-[#2f2f2f] divide-x-2 divide-[#2f2f2f]">
          <button aria-label="없음"><Svg w={24} h={24}><path d="M0 0H24V24H0Z" fill="#fff" /><path d="M0 24L24 0" stroke="#e11" strokeWidth="4" /></Svg></button>
          <button className="w-[26px] h-6 bg-[#050000]" aria-label="검정"></button>
          <button className="w-[26px] h-6 bg-white" aria-label="흰색"></button>
        </div>
        <label htmlFor="hex" className="ml-[211px] text-[20px] leading-6 text-[#e8e8e8] border-b-2 border-dotted border-[#c2c2c2]">#</label>
        <input id="hex" defaultValue="ffffff" className="ml-3 w-32 h-[42px] rounded border-2 border-[#606060] bg-[#454545] pl-2 pt-1 text-[20px] font-normal text-white" />
      </div>
      <div className="mt-3 pl-3"><Spectrum /></div>
    </div>
  );
}

const swatchRows = [
  ['bg-[#050000]', 'bg-[#e81619]', 'bg-[#eeeb35]', 'bg-[#69b82d]', 'bg-[#70c6d4]', 'bg-[#1d489c]', 'bg-[#a8529b]', 'bg-[#b3272d]', 'bg-[#dd1f26]', 'bg-[#e45a28]', 'bg-[#ee8f25]', 'bg-[#f0aa3f]'],
  ['bg-[#f0e531]', 'bg-[#d0d733]', 'bg-[#89c044]', 'bg-[#38ae4a]', 'bg-[#1c9045]', 'bg-[#136936]', 'bg-[#26ab70]', 'bg-[#1ea196]', 'bg-[#2b9fd4]', 'bg-[#0e6bb2]', 'bg-[#292d86]', 'bg-[#1b2953]', 'bg-[#5e2c88]', 'bg-[#8a2386]', 'bg-[#951d5b]'],
  ['bg-[#c51b5a]', 'bg-[#da2277]', 'bg-[#c5b19a]', 'bg-[#988675]', 'bg-[#716457]', 'bg-[#524841]', 'bg-[#c49a6c]', 'bg-[#a37c50]', 'bg-[#8a6139]', 'bg-[#744d23]', 'bg-[#5e391a]', 'bg-[#421f0e]',
    'bg-[linear-gradient(to_right,#fff,#736357_50%,#000_90%)]', 'bg-[linear-gradient(to_right,#c5def0,#2a94cf_60%,#0d5ca8)]', 'bg-[linear-gradient(to_right,#ee75a8,transparent),repeating-conic-gradient(#ccc_0_25%,#fff_0_50%)] bg-[length:auto,8px_8px]'],
];
const grays = ['bg-[#050000]', 'bg-[#181a19]', 'bg-[#313332]', 'bg-[#4a4a4a]', 'bg-[#636564]', 'bg-[#7e7e7e]', 'bg-[#989898]', 'bg-[#b1b1b1]', 'bg-[#cbcbcb]', 'bg-[#e3e3e3]', 'bg-[#f1f1f0]'];
const brights = ['bg-[#429ddb]', 'bg-[#79c148]', 'bg-[#f39026]', 'bg-[#e9212c]', 'bg-[#ee74a4]', 'bg-[#bbcad4]'];

function Swatches({ list }: any) {
  return list.map((c: string) => <button key={c} className={clsx('w-[26px] h-[26px]', c)} aria-label="견본 색상"></button>);
}

function Folder() {
  return <Svg w={26} h={26} cls="text-[#c2c2c2]"><path d="M2 4H12L16 8H24V22H2Z" /><path d="M4 6H11L14 10H4Z" fill="#535353" /></Svg>;
}

function SwatchPanel() {
  return (
    <div className="mt-0.5 flex-1 min-h-0 flex flex-col border-t-2 border-[#383838]">
      <div className="flex-none h-[54px] flex bg-[#434343] text-[26px]">
        <button className="w-[84px] pb-1.5 bg-[#535353] text-white">견본</button>
        <button className="w-[156px] pb-1.5 border-x-2 border-b-2 border-[#383838] text-[#a0a0a0]">라이브러리</button>
        <div className="flex-1 border-b-2 border-[#383838] flex items-center justify-end pr-3"><MenuLines /></div>
      </div>
      <div className="px-2.5 pt-3 flex">
        <FillStroke />
        <button className="ml-auto mt-2.5 w-[52px] h-[52px] rounded border-2 border-[#757575] flex items-center justify-center text-[#c2c2c2]" aria-label="색상 테마">
          <Svg w={34} h={34}><path d="M1 5H9V13H1ZM11 15H19V23H11ZM1 25H9V33H1ZM21 25H29V33H21Z" /><circle cx="26" cy="7" r="7" fill="#2d8ceb" /></Svg>
        </button>
        <div className="ml-2.5 mt-2.5 w-[98px] h-[52px] rounded border-2 border-[#606060] flex overflow-hidden">
          <button className="flex-1 flex items-center justify-center text-[#c2c2c2]" aria-label="목록 보기"><Svg w={24} h={28}><path d="M0 0H24V4H0ZM0 8H24V12H0ZM0 16H24V20H0ZM0 24H24V28H0Z" /></Svg></button>
          <button className="flex-1 flex items-center justify-center bg-[#2f2f2f] text-white" aria-label="축소판 보기"><Svg w={28} h={28}><path d="M0 0H8V8H0ZM10 0H18V8H10ZM20 0H28V8H20ZM0 10H8V18H0ZM10 10H18V18H10ZM20 10H28V18H20ZM0 20H8V28H0ZM10 20H18V28H10ZM20 20H28V28H20Z" /></Svg></button>
        </div>
      </div>
      <div className="mx-2.5 mt-2.5 flex-1 min-h-0 border-2 border-[#606060] flex flex-col gap-0.5">
        <div className="flex gap-0.5">
          <Svg w={26} h={26}><path d="M0 0H26V26H0Z" fill="#fff" /><path d="M2 24L24 2" stroke="#e11" strokeWidth="4" /></Svg>
          <Svg w={26} h={26}><path d="M0 0H26V26H0Z" fill="#eee" /><path d="M0 13H26M13 0V26" stroke="#444" /><circle cx="13" cy="13" r="9" fill="none" stroke="#444" /><circle cx="13" cy="13" r="4" fill="#fff" stroke="#444" /></Svg>
          <Svg w={26} h={26}><path d="M0 0H26V26H0Z" fill="#fff" /><path d="M3 3H23V23H3Z" fill="#fff" stroke="#000" strokeWidth="2" /></Svg>
          <Swatches list={swatchRows[0]} />
        </div>
        <div className="flex gap-0.5"><Swatches list={swatchRows[1]} /></div>
        <div className="flex gap-0.5"><Swatches list={swatchRows[2]} /></div>
        <div className="flex gap-0.5">
          <button className="w-[26px] h-[26px] bg-[radial-gradient(#fff,#f39026_70%)]" aria-label="방사형"></button>
          <button className="w-[26px] h-[26px] bg-white p-0.5" aria-label="원형 패턴"><span className="block w-[22px] h-[22px] rounded-full border border-[#d8c878] bg-[repeating-conic-gradient(#ccc_0_25%,#fff_0_50%)] bg-[length:8px_8px]"></span></button>
          <Svg w={26} h={26}><path d="M0 0H26V26H0Z" fill="#1c4f8c" /><path d="M1 9Q2 2 7 4T8 10M11 3Q17 1 17 7T12 11M20 2Q25 4 22 9T26 13M2 22Q3 14 8 17T11 24M14 15Q20 13 20 18T15 22M1 13L6 12M21 17Q25 19 23 25M5 25L8 21M17 24L20 25" fill="none" stroke="#dbe9f5" strokeWidth="2" /></Svg>
          <Svg w={26} h={26}><path d="M0 0H26V26H0Z" fill="#dcd9b4" /><g fill="#7fb6b4"><circle cx="5" cy="12" r="4" /><circle cx="17" cy="5" r="4" /><circle cx="21" cy="17" r="4" /><circle cx="9" cy="22" r="3" /></g><g fill="#a9c86c"><circle cx="4" cy="4" r="3" /><circle cx="13" cy="14" r="3" /><circle cx="24" cy="9" r="2" /></g></Svg>
        </div>
        <div className="mt-1 flex gap-0.5"><Folder /><Swatches list={grays} /></div>
        <div className="mt-1 flex gap-0.5"><Folder /><Swatches list={brights} /></div>
      </div>
      <div className="flex-none h-[38px] pl-[22px] pr-[54px] flex items-center text-[#c2c2c2]">
        <Svg w={30} h={24}><path d="M0 2H4V22H0ZM6 0H11V22H6ZM12 2L16 1L21 21L17 23ZM23 17H30L27 22Z" /></Svg>
        <Svg w={28} h={26} cls="ml-[22px]"><path d="M4 10V2H20M8 5H25V24H13" {...line} /><path d="M0 17H6V12L13 18L6 25V20H0ZM17 5H22V15L19 12L17 15Z" /></Svg>
        <div className="ml-auto flex items-center gap-[26px]">
          <Svg w={30} h={24}><path d="M0 1H20V23H0ZM23 18H30L27 23Z" /><path d="M3 4H7V8H3ZM9 4H13V8H9ZM3 11H7V15H3ZM9 11H13V15H9ZM8 17H12V21H8ZM14 17H18V21H14Z" fill="#6e6e6e" /></Svg>
          <Svg w={22} h={24}><path d="M1 2H21V22H1Z" {...line} /><path d="M1 1H21V6H1ZM5 9H7V11H5ZM9 9H18V11H9ZM5 13H7V15H5ZM9 13H18V15H9ZM5 17H7V19H5ZM9 17H18V19H9Z" /></Svg>
          <Svg w={28} h={24}><path d="M1 1H11L16 6H27V22H1Z" /><path d="M3 3H10L12 7H3Z" fill="#535353" /></Svg>
          <Svg w={26} h={24}><path d="M3 2H23V22H3Z" {...line} /><path d="M8 12H18M13 7V17" {...line} /></Svg>
          <Svg w={26} h={26}><path d="M2 5H24M9 5V2H17V5M5 6V24H21V6M10 9V21M13 9V21M16 9V21" {...line} /></Svg>
        </div>
      </div>
    </div>
  );
}

// 정렬 패널
const alignRows: any[][] = [
  [
    'M1 0H3V36H1ZM5 4H20V16H5ZM5 20H31V30H5Z',
    'M17 0H19V36H17ZM9 4H27V16H9ZM5 20H31V30H5Z',
    'M33 0H35V36H33ZM16 4H31V16H16ZM5 20H31V30H5Z',
    'M0 2H36V4H0ZM6 6H16V32H6ZM20 6H32V22H20Z',
    'M0 16H36V18H0ZM6 4H16V30H6ZM20 8H32V26H20Z',
    'M0 32H36V34H0ZM6 4H16V30H6ZM20 14H32V30H20Z',
  ],
  [
    'M0 2H36V4H0ZM10 6H26V14H10ZM0 20H36V22H0ZM6 24H30V34H6Z',
    'M0 8H36V10H0ZM10 4H26V14H10ZM0 26H36V28H0ZM6 22H30V32H6Z',
    'M10 2H26V10H10ZM0 12H36V14H0ZM6 20H30V30H6ZM0 32H36V34H0Z',
    'M2 0H4V36H2ZM6 6H16V30H6ZM22 0H24V36H22ZM26 10H34V26H26Z',
    'M6 0H8V36H6ZM2 6H12V30H2ZM24 0H26V36H24ZM20 10H30V26H20Z',
    'M2 6H12V30H2ZM15 0H17V36H15ZM22 10H30V26H22ZM33 0H35V36H33Z',
  ],
];

function AlignRow({ paths }: any) {
  return (
    <div className="h-[54px] flex items-center pl-2 pr-2 justify-between">
      {[0, 3].map((s) => (
        <div key={s} className="flex gap-9">
          {paths.slice(s, s + 3).map((d: string) => <button key={d} aria-label="정렬 옵션"><Svg w={36} h={36}><path d={d} /></Svg></button>)}
        </div>
      ))}
    </div>
  );
}

function AlignPanel() {
  return (
    <section className="absolute right-[574px] top-[544px] w-[484px] border-2 border-t-8 border-[#383838] bg-[#535353] text-[#c2c2c2] text-[22px]">
      <div className="h-[55px] flex bg-[#434343] text-[26px] leading-[46px] text-[#a0a0a0] whitespace-nowrap">
        <button className="w-[70px] flex-none pl-5 pb-1 text-left overflow-hidden border-r-2 border-b-2 border-[#383838]">변형</button>
        <button className="w-[64px] flex-none pb-1 border-r-2 border-b-2 border-[#383838]">획</button>
        <button className="w-[92px] flex-none pb-1 pr-1.5 flex items-center justify-center gap-3 bg-[#535353] text-white"><UpDown />정렬</button>
        <button className="w-[126px] flex-none pl-[18px] pb-1 text-left overflow-hidden border-x-2 border-b-2 border-[#383838]">패스파인더</button>
        <div className="flex-1 border-b-2 border-[#383838] flex items-center justify-end gap-3.5 pr-3">
          <Svg w={20} h={16}><path d="M2 1L8 8L2 15M11 1L17 8L11 15" {...line} stroke="#d8d8d8" /></Svg>
          <span className="w-0.5 h-6 bg-[#a0a0a0]"></span>
          <MenuLines />
        </div>
      </div>
      <div className="px-2.5">
        <h3 className="mt-2.5 leading-9">오브젝트 정렬:</h3>
        <div className="mt-2 border-b-2 border-[#4a4a4a] pb-2.5"><AlignRow paths={alignRows[0]} /></div>
        <h3 className="mt-2.5 leading-9">오브젝트 분포:</h3>
        <div className="mt-2 border-b-2 border-[#4a4a4a] pb-2.5"><AlignRow paths={alignRows[1]} /></div>
        <div className="mt-2.5 h-[106px] flex">
          <div className="w-[264px] border-r-2 border-[#4a4a4a]">
            <h3 className="leading-9">분포 간격:</h3>
            <div className="mt-2 flex items-center">
              <button className="ml-[7px]" aria-label="세로 분포 간격"><Svg w={36} h={36}><path d="M14 3H30V15H14ZM12 21H36V31H12ZM4 9H6V28H4ZM1 13H9V15H1ZM1 23H9V25H1Z" /></Svg></button>
              <button className="-my-4 ml-[7px] w-[76px] h-[86px] border-[6px] border-[#e61e1e] flex items-center justify-center" aria-label="가로 분포 간격"><Svg w={36} h={36}><path d="M4 10H14V34H4ZM20 12H32V28H20ZM8 3H26V5H8ZM12 0H14V8H12ZM20 0H22V8H20Z" /></Svg></button>
              <div className="w-[112px] h-[42px] rounded bg-[#585858] flex items-center text-[#7a7a7a]">
                <Svg w={34} h={36}><path d="M10 13L17 6L24 13M10 23L17 30L24 23" {...line} strokeWidth="3" /></Svg>
                <input aria-label="간격" defaultValue="0 mm" disabled className="w-[72px] pl-1 border-l-2 border-[#535353] text-[20px] h-full" />
              </div>
            </div>
          </div>
          <div className="pl-5">
            <h3 className="leading-9">정렬 대상:</h3>
            <div className="mt-2.5 flex items-center text-[#757575]">
              <button className="ml-2" aria-label="대지에 정렬"><Svg w={36} h={36}><path d="M10 10H22L28 16V30H10ZM22 10V16H28M2 9H7M9 2V7" {...line} /></Svg></button>
              <button className="ml-5 w-[50px] h-[50px] rounded bg-[#585858] text-[#8d8d8d] flex items-center justify-center" aria-label="선택 항목에 정렬"><Svg w={36} h={36}><path d="M6 6H30V30H6Z" {...line} /><path d="M3 3H9V9H3ZM15 3H20V8H15ZM27 3H33V9H27ZM3 15H8V20H3ZM16 16H20V20H16ZM28 15H33V20H28ZM3 27H9V33H3ZM15 28H20V33H15ZM27 27H33V33H27Z" /></Svg></button>
              <button className="ml-5" aria-label="주요 오브젝트에 정렬"><Svg w={36} h={36}><path d="M6 6H30V30H6Z" {...line} strokeDasharray="5 3" /><path d="M3 3H9V9H3ZM27 3H33V9H27ZM3 27H9V33H3ZM27 27H33V33H27ZM10 9L20 14L26 24L20 28L16 22Z" /></Svg></button>
            </div>
          </div>
        </div>
      </div>
    </section>
  );
}

// 작업 표시줄 아이콘 (46x46)
const apps: any[] = [
  { n: '시작', d: <g fill="#4cc2ff"><path d="M0 0H22V22H0Z" fill="#7be0fb" /><path d="M24 0H46V22H24ZM0 24H22V46H0Z" /><path d="M24 24H46V46H24Z" fill="#1ba1f8" /></g> },
  { n: '검색', d: <><circle cx="20" cy="20" r="17" fill="#3b4560" stroke="#e8eaee" strokeWidth="4" /><path d="M32 33L42 43" stroke="#d4dbe2" strokeWidth="5" strokeLinecap="round" /></> },
  { n: '작업 보기', d: <><path d="M0 13H34V44H0Z" fill="#606060" /><path d="M11 1H46V32H11Z" fill="#f2f2f2" /><path d="M11 13H34V32H11Z" fill="#a8a8a8" /></> },
  { n: '탐색기', dot: true, d: <><path d="M0 4Q0 2 2 2H14L19 7H0Z" fill="#d8930c" /><path d="M0 8L18 7H44Q46 7 46 9V44H0Z" fill="#fbc83a" /><path d="M8 44V34Q8 30 12 30H35Q39 30 39 34V44Z" fill="#0e76c8" /><path d="M15 37H32" stroke="#0a4d8c" strokeWidth="2" /></> },
  { n: '스토어', d: <><path d="M10 12V1H35V12" fill="none" stroke="#1b9de2" strokeWidth="4" /><path d="M0 7H46V38Q46 46 38 46H8Q0 46 0 38Z" fill="#ececec" /><path d="M13 16H22V25H13Z" fill="#f05022" /><path d="M24 16H33V25H24Z" fill="#7fba00" /><path d="M13 27H22V36H13Z" fill="#00a4ef" /><path d="M24 27H33V36H24Z" fill="#ffb900" /></> },
  { n: '톡', dot: true, d: <><rect width="46" height="46" rx="6" fill="#fae100" /><ellipse cx="23" cy="22" rx="18" ry="15" fill="#3b1e1e" /><path d="M12 32L13 42L22 35Z" fill="#3b1e1e" /><text x="23" y="27" textAnchor="middle" fontSize="12" fontWeight="800" fill="#fae100">TALK</text></> },
  { n: '설정 앱', d: <><rect width="46" height="46" rx="6" fill="#8b7cf6" /><path d="M9 9H37V37H9Z" fill="none" stroke="#fff" strokeWidth="2" /><path d="M17 16V30M23 16V30M29 16V30M15 20H19M21 26H25M27 23H31" stroke="#fff" strokeWidth="2" /></> },
  { n: '메모장', d: <><path d="M5 4H41V42H5Z" fill="#5cc8e4" /><path d="M5 38H41V42H5Z" fill="#eee" /><path d="M5 42H41V46H5Z" fill="#a0522d" /><path d="M11 14H35M11 22H35M11 30H35" stroke="#0b6286" strokeWidth="3" /><path d="M10 0V6M17 0V6M24 0V6M31 0V6M38 0V6" stroke="#0b6286" strokeWidth="3" /></> },
  { n: '엣지', d: <><circle cx="23" cy="23" r="23" fill="#1583d8" /><path d="M2 14Q10 0 25 0Q46 2 46 20Q45 31 34 31Q26 30 29 23Q28 12 15 12Q6 12 2 14Z" fill="#3ccbb4" /><path d="M14 24Q14 15 23 15Q31 18 29 24Q26 30 34 31Q40 32 44 28Q42 34 38 38Q16 40 14 24Z" fill="#11295e" /><path d="M14 22Q12 44 38 39Q30 48 18 45Q4 40 14 22Z" fill="#0f58a8" /></> },
  { n: '크롬', dot: true, d: <><circle cx="23" cy="23" r="23" fill="#fbc116" /><path d="M3 12Q10 0 23 0Q37 0 43 12H23L13 29Z" fill="#e33b2e" /><path d="M3 12L14 29L23 34L19 46Q0 42 0 23Q0 17 3 12Z" fill="#2aa147" /><circle cx="23" cy="23" r="11" fill="#fff" /><circle cx="23" cy="23" r="9" fill="#3a7de9" /></> },
  { n: '노션', dot: true, d: <><path d="M5 7L32 4L41 10V42L13 44L5 34Z" fill="#fff" stroke="#000" strokeWidth="2" /><path d="M5 7L13 13L41 11M13 13V43" fill="none" stroke="#000" strokeWidth="3" /><text x="27" y="37" textAnchor="middle" fontSize="25" fontWeight="700" fontFamily="Liberation Serif" fill="#000">N</text></> },
  { n: 'CC', d: <foreignObject width="46" height="46"><div className="w-[42px] h-[40px] mx-0.5 rounded-md bg-[conic-gradient(#f33,#fa0,#fe0,#3c6,#39f,#93f,#e2a,#f33)] flex items-center justify-center"><svg width="34" height="30" viewBox="0 0 34 30"><path d="M12 25Q2 25 2 15T12 6Q18 6 20 12M9 18L20 7Q31 5 31 15T21 24Q14 24 11 12M20 12Q24 18 20 22" fill="none" stroke="#fff" strokeWidth="3" /></svg></div></foreignObject> },
  { n: '일러스트레이터', on: true, d: <><rect x="2" y="2" width="42" height="40" rx="6" fill="#330000" /><text x="23" y="30" textAnchor="middle" fontSize="22" fontWeight="700" fill="#ff9a00">Ai</text></> },
  { n: '휴대폰', d: <><path d="M3 4H43V34H3Z" fill="#0f6fb8" /><path d="M0 33H46V37H0Z" fill="#1a4f84" /><path d="M10 8H30V44H10Z" fill="#1286d0" /><path d="M10 8Q10 8 12 8H29V32H10Z" fill="#38c5f4" /><path d="M15 11H26" stroke="#0b4e7c" strokeWidth="2" /></> },
  { n: '워드', d: <><rect y="1" width="46" height="45" rx="3" fill="#8152f2" /><path d="M22 1H29V46H22Z" fill="#2b0a66" /><path d="M29 1H37V46H29Z" fill="#4f1bc9" /><text x="11" y="22" textAnchor="middle" fontSize="20" fontWeight="500" fill="#fff">W</text></> },
  { n: '원격', d: <><path d="M9 6H43V32H9Z" fill="#ddd" stroke="#666" strokeWidth="3" /><path d="M2 15H37V42H2Z" fill="#f4f4f4" stroke="#888" strokeWidth="2" /><path d="M8 41A12 12 0 0 1 32 41Z" fill="#e33b2e" /><path d="M20 32L32 41H20Z" fill="#fbc116" /><path d="M9 35L18 41H8Z" fill="#2aa147" /><circle cx="20" cy="38" r="5" fill="#3a7de9" stroke="#fff" strokeWidth="2" /></> },
  { n: '전자도서관', d: <><rect width="46" height="46" rx="4" fill="#47a83c" /><path d="M0 30H23V46H4Q0 46 0 42Z" fill="#ccc" /><path d="M23 30H46V42Q46 46 42 46H23Z" fill="#fff" /><path d="M38 30H42V37L40 35L38 37Z" fill="#47a83c" /><circle cx="23" cy="8" r="3" fill="#fff" /><text x="23" y="16" textAnchor="middle" fontSize="5" fill="#fff">KYOBO 교보문고</text><text x="23" y="25" textAnchor="middle" fontSize="7" fill="#fff">전자도서관</text></> },
  { n: '스티커 메모', d: <><path d="M2 3H44V44H2Z" fill="#fdd000" /><path d="M24 44V23H44Z" fill="#3a3a3a" /><path d="M24 44L44 23V44Z" fill="#f0a800" /></> },
  { n: '필기 앱', d: <><rect width="46" height="46" rx="11" fill="#7c54f0" /><path d="M22 10H10Q7 10 7 14V32Q7 36 10 36H22" fill="none" stroke="#fff" strokeWidth="2" /><rect x="25" y="9" width="14" height="28" rx="7" fill="none" stroke="#fff" strokeWidth="3" /><path d="M12 16H20M12 21H20M12 26H20M12 31H20" stroke="#fff" strokeWidth="3" strokeDasharray="3 2" /><path d="M32 16V21" stroke="#fff" strokeWidth="2" /></> },
];

function TaskBar() {
  return (
    <footer className="h-24 flex-none border-t-2 border-[#454c59] flex items-center text-white bg-[linear-gradient(to_right,#1b222c_0,#1b222e_18%,#111f5c_24%,#111f5c_36%,#112355_42%,#101f60_46%,#1b1c3c_54%,#122060_58%,#122060_62%,#1c1d26_70%,#1b222e_80%,#1b202b_100%)]">
      <div className="w-[511px] flex-none pl-10 pb-2">
        <Svg w={54} h={54}>
          <path d="M12 51Q0 50 0 39Q1 30 9 29Q10 16 22 16Q34 17 36 29Q47 30 47 40Q46 50 36 51Z" fill="#8db4f0" />
          <path d="M12 51Q0 50 0 39Q1 30 11 32Q24 34 26 42Q32 36 47 42Q45 50 36 51Z" fill="#b5cdf8" />
          <circle cx="37" cy="17" r="16" fill="#fd99a2" /><text x="37" y="24" textAnchor="middle" fontSize="20" fontWeight="400" fill="#000">4</text>
        </Svg>
      </div>
      <div className="flex">
        {apps.map((a) => (
          <div key={a.n} className="w-[88px] h-[94px] pb-1 flex items-center justify-center">
            <button aria-label={a.n} className={clsx('relative w-[78px] h-20 rounded-md flex items-center justify-center', a.on && 'bg-[#27305a] border border-[#3b4468]')}>
              <Svg w={46} h={46}>{a.d}</Svg>
              {a.dot && <span className="absolute bottom-0 w-3 h-1.5 rounded-full bg-[#9aa0b4]"></span>}
              {a.on && <span className="absolute bottom-0 w-8 h-1.5 rounded-full bg-[#4cc2ff]"></span>}
            </button>
          </div>
        ))}
      </div>
      <div className="ml-auto pr-10 pb-1 flex items-center">
        <Svg w={22} h={14}><path d="M1 12L11 2L21 12" {...line} strokeWidth="3" /></Svg>
        <Svg w={34} h={36} cls="ml-[37px]"><path d="M2 17Q3 3 16 2Q24 2 29 9M30 1V10H21M3 34V23H12M4 25Q10 32 17 31" {...line} /><circle cx="25" cy="26" r="8" fill="#ff9800" /></Svg>
        <Svg w={26} h={34} cls="ml-[34px]"><path d="M1 33L13 2L25 33M6 22H20" {...line} /></Svg>
        <Svg w={34} h={26} cls="ml-[34px]"><path d="M1 10Q17 -6 33 10M6 15Q17 4 28 15M11 20Q17 13 23 20" {...line} strokeWidth="3" /><circle cx="17" cy="23" r="3" /></Svg>
        <Svg w={32} h={26} cls="ml-3.5"><path d="M2 9H7L14 2V24L7 17H2ZM20 8L30 18M30 8L20 18" {...line} /></Svg>
        <Svg w={36} h={32} cls="ml-4"><path d="M9 4H23Q27 4 27 8V11H30V17M2 12V20Q2 24 6 24H17" {...line} strokeWidth="3" /><path d="M11 8H24V14L16 22H6V14ZM5 0L0 11H4L2 18L10 7H6L9 0Z" /><path d="M25 31L17 23Q17 17 22 18L25 20L28 18Q34 18 33 23Z" /></Svg>
        <div className="ml-7 text-right text-[24px] leading-[33px] font-normal whitespace-nowrap">
          <div>오전 9:41</div>
          <div>2025-01-16</div>
        </div>
        <Svg w={28} h={32} cls="ml-[18px]"><path d="M12 2Q22 2 22 12V19L26 25H0L3 19V12Q3 3 12 2Z" /><path d="M8 27H18Q17 31 13 31T8 27Z" /><path d="M9 10H16L9 18H16" fill="none" stroke="#1b202b" strokeWidth="2" /><path d="M19 2H26L20 9H27" fill="none" stroke="#fff" strokeWidth="2" /></Svg>
      </div>
    </footer>
  );
}

export default function App() {
  return (
    <div className="h-screen flex flex-col overflow-hidden bg-[#535353] font-['Open_Sans','Noto_Sans_CJK_KR',sans-serif] font-[350]">
      <TopBar />
      <OptionBar />
      <main className="relative flex-1 min-h-0 flex border-b-2 border-[#383838] bg-[#4a4a4a]">
        <div className="flex-none flex bg-[#535353] mr-[3px]"><ToolPanel /></div>
        <DocArea />
        <div className="flex-none flex gap-0.5 pl-0.5 bg-[#4a4a4a]">
          <div className="flex bg-[#535353]"><DockColumn groups={layers} /></div>
          <div className="flex bg-[#535353]"><DockColumn groups={dock} active="정렬" /></div>
          <div className="w-[494px] flex flex-col border-x-2 border-[#383838] bg-[#535353]">
            <div className="h-6 flex-none bg-[#434343] border-b-2 border-[#383838] flex items-center justify-end pr-2.5"><Arrows dir="r" /></div>
            <ColorPanel />
            <SwatchPanel />
          </div>
        </div>
        <AlignPanel />
      </main>
      <TaskBar />
    </div>
  );
}
